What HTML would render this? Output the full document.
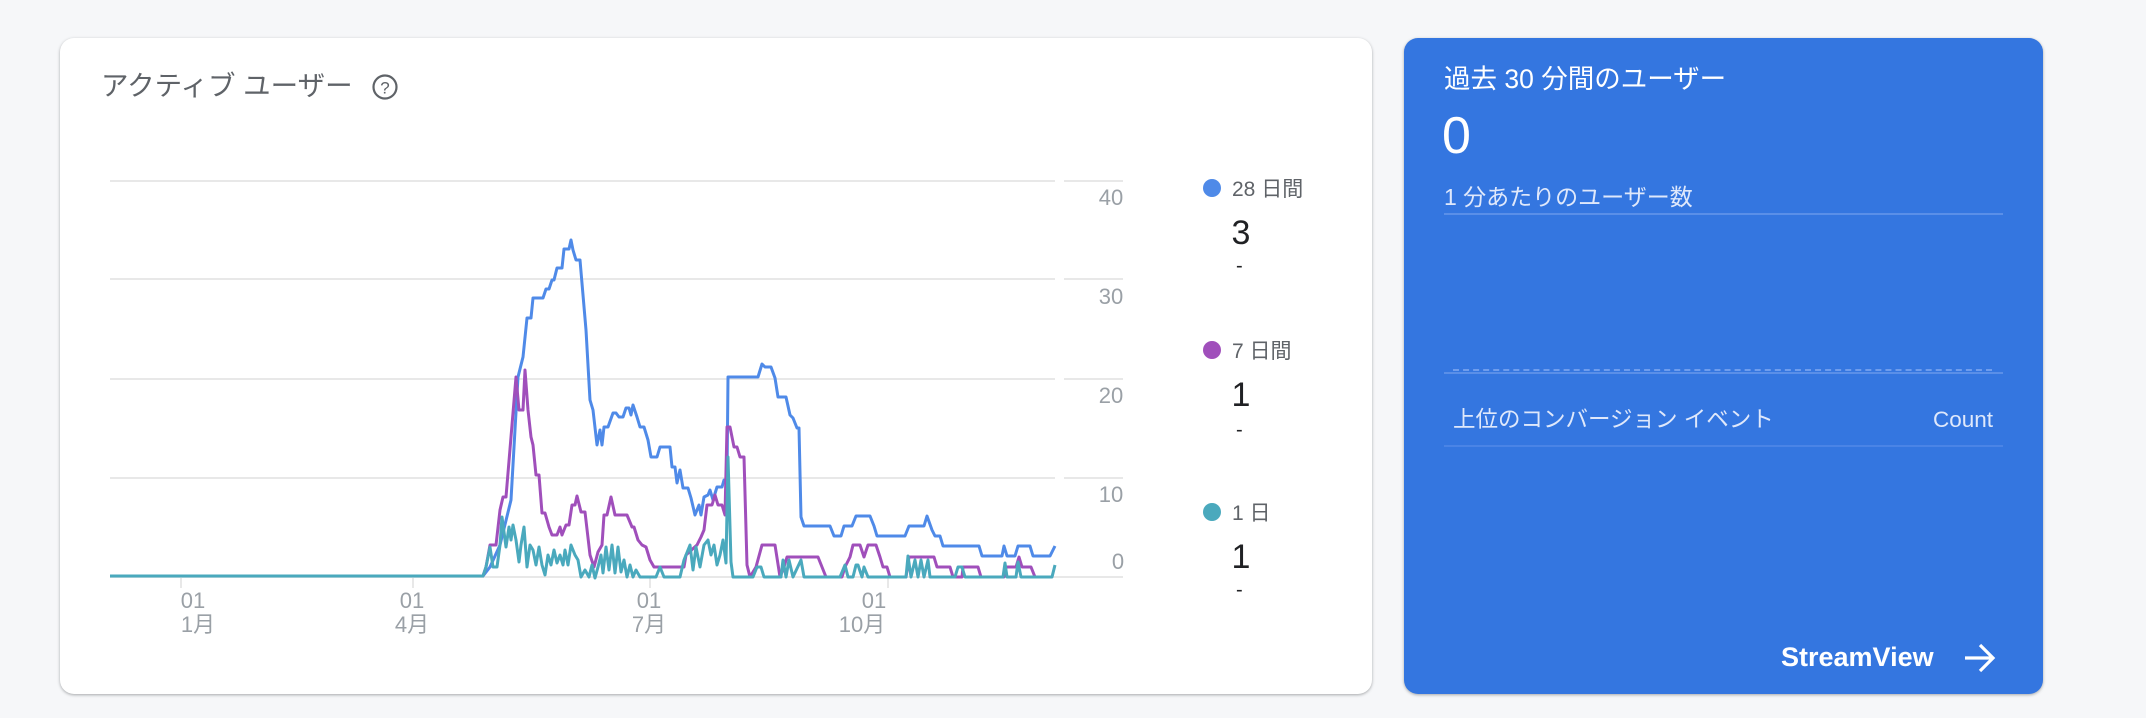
<!DOCTYPE html>
<html><head><meta charset="utf-8"><style>
body{margin:0;width:2146px;height:718px;background:#f6f7f9;position:relative;overflow:hidden;font-family:"Liberation Sans","Noto Sans CJK JP",sans-serif}
.a{position:absolute;white-space:nowrap}
.card{position:absolute;border-radius:14px;box-shadow:0 1px 3px rgba(60,64,67,.3),0 1px 2px rgba(60,64,67,.15)}
</style></head><body>
<div class="card" style="left:60px;top:38px;width:1312px;height:656px;background:#fff"></div>
<div class="a" style="left:101px;top:69px;font-size:27.5px;color:#5f6368;line-height:34px">アクティブ ユーザー</div>
<svg class="a" style="left:371px;top:73px" width="28" height="28" viewBox="0 0 28 28"><circle cx="14" cy="14" r="11.5" fill="none" stroke="#5f6368" stroke-width="2.2"/><text x="14" y="20.5" font-size="17" text-anchor="middle" fill="#5f6368" font-family="Liberation Sans">?</text></svg>

<svg class="a" style="left:0;top:0" width="1400" height="718">
<g stroke="#e8e8e8" stroke-width="2">
<line x1="110" y1="181" x2="1055" y2="181"/><line x1="1064" y1="181" x2="1123" y2="181"/>
<line x1="110" y1="279" x2="1055" y2="279"/><line x1="1064" y1="279" x2="1123" y2="279"/>
<line x1="110" y1="379" x2="1055" y2="379"/><line x1="1064" y1="379" x2="1123" y2="379"/>
<line x1="110" y1="478" x2="1055" y2="478"/><line x1="1064" y1="478" x2="1123" y2="478"/>
<line x1="110" y1="577" x2="1123" y2="577"/>
<line x1="181" y1="577" x2="181" y2="588"/><line x1="413" y1="577" x2="413" y2="588"/><line x1="650" y1="577" x2="650" y2="588"/><line x1="888" y1="577" x2="888" y2="588"/>
</g>
<g font-size="22" fill="#9aa0a6" font-family="Liberation Sans" text-anchor="middle">
<text x="1111" y="205">40</text><text x="1111" y="304">30</text><text x="1111" y="403">20</text><text x="1111" y="502">10</text><text x="1118" y="569">0</text>
<text x="193" y="608">01</text><text x="198" y="632" font-family="Liberation Sans,Noto Sans CJK JP">1月</text>
<text x="412" y="608">01</text><text x="412" y="632" font-family="Liberation Sans,Noto Sans CJK JP">4月</text>
<text x="649" y="608">01</text><text x="649" y="632" font-family="Liberation Sans,Noto Sans CJK JP">7月</text>
<text x="874" y="608">01</text><text x="862" y="632" font-family="Liberation Sans,Noto Sans CJK JP">10月</text>
</g>
<g fill="none" stroke-width="3" stroke-linejoin="round">
<polyline stroke="#4f8ae8" points="110,576 483,576 490,567 500,545 511,500 518,377 523,357 527,318 531,318 533,298 543,298 546,289 549,289 552,280 554,280 557,268 562,268 564,249 569,249 571,240 573,250 576,260 580,260 586,330 590,400 593,410 597,445 600,430 602,445 604,427 608,427 613,413 616,413 619,417 623,417 626,408 629,408 631,415 633,405 637,417 640,427 644,427 648,440 651,457 657,457 660,447 670,447 672,467 675,467 677,483 680,470 683,488 688,488 691,498 695,515 699,505 701,515 704,497 708,495 710,490 713,500 717,487 722,487 724,480 727,480 728,377 758,377 762,364 765,367 771,367 775,378 778,397 786,397 790,415 793,418 797,428 799,428 801,517 804,526 830,526 834,536 841,536 844,526 852,526 856,516 870,516 874,526 877,536 905,536 909,526 924,526 927,516 932,530 935,536 940,536 943,546 979,546 982,556 1002,556 1004,546 1007,556 1015,556 1018,546 1030,546 1033,556 1050,556 1055,546"/>
<polyline stroke="#a04fbb" points="110,576 483,576 486,567 490,545 496,545 500,510 503,497 506,497 511,437 516,377 519,410 523,410 525,370 528,410 531,437 533,445 536,475 539,475 542,513 545,513 549,527 552,535 557,535 560,527 562,535 566,525 569,525 572,505 575,505 577,496 581,512 585,512 590,555 594,567 598,552 602,545 604,515 607,515 611,497 615,515 627,515 632,527 634,527 638,540 642,545 646,547 650,560 654,567 684,567 686,555 697,545 701,537 704,530 707,505 712,505 715,495 718,505 722,505 725,515 727,427 730,427 734,447 737,447 740,457 744,457 747,565 750,577 756,567 762,545 775,545 780,577 784,567 787,557 818,557 822,567 826,577 842,577 845,567 850,557 853,545 860,545 864,557 868,545 876,545 880,557 883,567 887,567 890,577 906,577 909,557 934,557 937,567 950,567 953,577 962,577 963,567 978,567 981,577 1004,577 1006,567 1016,567 1019,557 1022,567 1031,567 1035,577 1050,577"/>
<polyline stroke="#4aa9bd" points="110,576 483,576 486,567 490,547 493,567 497,567 500,545 502,517 506,547 509,527 511,540 513,525 516,540 519,562 521,545 524,527 527,567 530,545 533,550 536,565 539,547 542,565 545,575 548,555 551,565 554,550 557,563 560,555 563,565 565,550 568,565 571,545 575,555 578,560 581,577 585,570 589,577 592,565 595,578 598,567 601,555 603,573 606,547 609,570 612,545 615,573 618,547 621,572 624,560 627,577 630,565 633,577 636,570 640,577 656,577 660,567 664,577 680,577 684,560 690,545 693,570 696,547 700,567 704,545 708,540 711,555 714,545 717,565 720,555 723,540 726,563 728,457 731,562 733,577 753,577 757,567 761,567 764,577 781,577 783,560 786,577 789,560 793,577 801,560 804,577 840,577 845,565 848,577 853,577 856,565 858,565 862,577 864,567 868,577 906,577 908,556 911,577 915,560 918,577 921,560 924,577 928,560 930,577 955,577 958,567 962,567 965,577 1003,577 1005,563 1007,577 1016,577 1018,562 1021,577 1052,577 1055,565"/>
</g>
<g font-family="Liberation Sans,Noto Sans CJK JP">
<circle cx="1212" cy="188" r="9" fill="#4f8ae8"/><text x="1232" y="196" font-size="21" fill="#5f6368">28 日間</text>
<text x="1241" y="244" font-size="34" fill="#202124" text-anchor="middle">3</text><text x="1236" y="272" font-size="20" fill="#202124">-</text>
<circle cx="1212" cy="350" r="9" fill="#a04fbb"/><text x="1232" y="358" font-size="21" fill="#5f6368">7 日間</text>
<text x="1241" y="406" font-size="34" fill="#202124" text-anchor="middle">1</text><text x="1236" y="436" font-size="20" fill="#202124">-</text>
<circle cx="1212" cy="512" r="9" fill="#4aa9bd"/><text x="1232" y="520" font-size="21" fill="#5f6368">1 日</text>
<text x="1241" y="568" font-size="34" fill="#202124" text-anchor="middle">1</text><text x="1236" y="596" font-size="20" fill="#202124">-</text>
</g>
</svg>

<div class="card" style="left:1404px;top:38px;width:639px;height:656px;background:#3476e0"></div>
<div class="a" style="left:1444px;top:62px;font-size:26.5px;color:#fff;line-height:34px">過去 30 分間のユーザー</div>
<div class="a" style="left:1442px;top:106px;font-size:52px;color:#fff;line-height:60px">0</div>
<div class="a" style="left:1444px;top:183px;font-size:23px;color:#dfe8fb;line-height:28px">1 分あたりのユーザー数</div>
<div class="a" style="left:1444px;top:213px;width:559px;height:2px;background:#5a8fe8"></div>
<div class="a" style="left:1453px;top:369px;width:539px;border-top:2px dashed #6f9ded"></div>
<div class="a" style="left:1444px;top:372px;width:559px;height:2px;background:#5a8fe8"></div>
<div class="a" style="left:1453px;top:406px;font-size:22.5px;color:#dfe8fb;line-height:28px">上位のコンバージョン イベント</div>
<div class="a" style="left:1933px;top:406px;font-size:22.5px;color:#dfe8fb;line-height:28px">Count</div>
<div class="a" style="left:1444px;top:445px;width:559px;height:2px;background:#4a84e6"></div>
<div class="a" style="left:1781px;top:641px;font-size:27px;font-weight:bold;color:#fff;line-height:32px">StreamView</div>
<svg class="a" style="left:1962px;top:641px" width="36" height="34" viewBox="0 0 36 34"><path d="M3 17H31M18 4L31 17L18 30" fill="none" stroke="#fff" stroke-width="3.2"/></svg>
</body></html>
